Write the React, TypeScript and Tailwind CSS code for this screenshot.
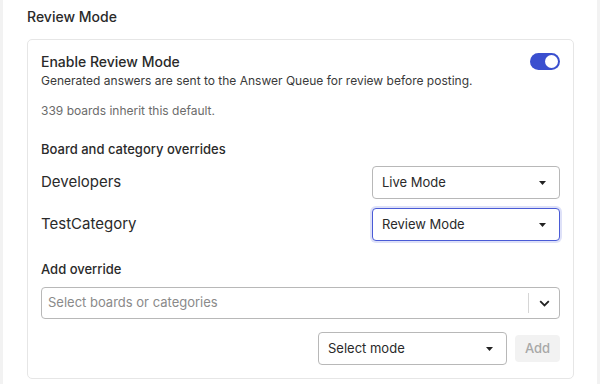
import React from 'react';

function Caret() {
    return (
        <svg width="7" height="4" viewBox="0 0 7 4" className="shrink-0">
            <path d="M0 0 L7 0 L3.5 4 Z" fill="#222" />
        </svg>
    );
}

function ModeSelect({ label, focused = false, width = 'w-[188px]' }: { label: string; focused?: boolean; width?: string }) {
    return (
        <div
            className={`${width} h-[33px] flex items-center justify-between pl-[9px] pr-[13px] rounded-[4px] bg-white text-[13px] text-[#2a2a2a] ${
                focused
                    ? 'border border-[#4a5bd6] shadow-[0_0_0_2px_rgba(74,91,214,0.18)]'
                    : 'border border-[#b8b8b8]'
            }`}
        >
            <span>{label}</span>
            <Caret />
        </div>
    );
}

function OverrideRow({ name, mode, focused }: { name: string; mode: string; focused?: boolean }) {
    return (
        <div className="flex items-center justify-between">
            <span className="text-[15px] text-[#2a2a2a]">{name}</span>
            <ModeSelect label={mode} focused={focused} />
        </div>
    );
}

export default function App() {
    return (
        <div className="w-[600px] h-[384px] flex bg-white overflow-hidden" style={{ fontFamily: 'Inter, "Noto Sans", sans-serif' }}>
            <div className="w-[3px] bg-[#f2f2f2] shrink-0"></div>

            <div className="flex-1 pl-[24px] pr-[23px] pt-[7px]">
                <h2 className="text-[14px] leading-[20px] font-medium text-[#2a2a2a]">Review Mode</h2>

                <div className="mt-[12px] border border-[#e6e6e6] rounded-[5px] px-[13px] pt-[12px] pb-[13px]">
                    {/* default toggle */}
                    <div className="flex items-start justify-between">
                        <div>
                            <div className="text-[14px] leading-[20px] font-medium text-[#2a2a2a]">Enable Review Mode</div>
                            <div className="mt-[1px] text-[12px] leading-[16px] text-[#3a3a3a]">
                                Generated answers are sent to the Answer Queue for review before posting.
                            </div>
                        </div>
                        <div className="w-[30px] h-[17px] rounded-full bg-[#3a4fcf] flex items-center justify-end pr-[2px] mt-[1px]">
                            <div className="w-[13px] h-[13px] rounded-full bg-white"></div>
                        </div>
                    </div>

                    <div className="mt-[14px] text-[12px] leading-[16px] text-[#6b6b6b]">339 boards inherit this default.</div>

                    {/* overrides */}
                    <div className="mt-[21px] text-[13px] leading-[18px] font-medium text-[#2a2a2a]">Board and category overrides</div>
                    <div className="mt-[8px] flex flex-col gap-[9px]">
                        <OverrideRow name="Developers" mode="Live Mode" />
                        <OverrideRow name="TestCategory" mode="Review Mode" focused />
                    </div>

                    {/* add override */}
                    <div className="mt-[19px] text-[13px] leading-[18px] font-medium text-[#2a2a2a]">Add override</div>
                    <div className="mt-[9px] h-[32px] flex items-center border border-[#b8b8b8] rounded-[4px] pl-[6px]">
                        <span className="flex-1 text-[13px] text-[#8a8a8a]">Select boards or categories</span>
                        <div className="w-px h-[20px] bg-[#d6d6d6]"></div>
                        <div className="w-[30px] flex items-center justify-center">
                            <svg width="11" height="7" viewBox="0 0 11 7">
                                <path d="M1.2 1.2 L5.5 5.5 L9.8 1.2" fill="none" stroke="#222" strokeWidth="1.8" />
                            </svg>
                        </div>
                    </div>

                    <div className="mt-[13px] flex items-center justify-end gap-[8px]">
                        <ModeSelect label="Select mode" width="w-[189px]" />
                        <button className="w-[45px] h-[27px] rounded-[4px] bg-[#f2f2f2] text-[13px] font-medium text-[#a8a8a8]">Add</button>
                    </div>
                </div>
            </div>

            <div className="w-[3px] bg-[#f2f2f2] shrink-0"></div>
        </div>
    );
}
